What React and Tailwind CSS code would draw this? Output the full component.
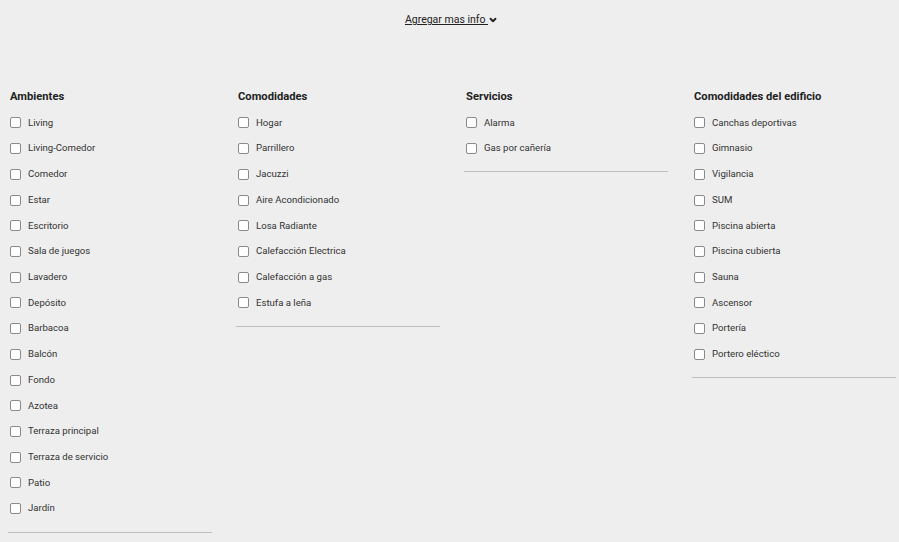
import { ChevronDown } from "lucide-react";

const columns = [
  {
    title: "Ambientes",
    items: [
      "Living",
      "Living-Comedor",
      "Comedor",
      "Estar",
      "Escritorio",
      "Sala de juegos",
      "Lavadero",
      "Depósito",
      "Barbacoa",
      "Balcón",
      "Fondo",
      "Azotea",
      "Terraza principal",
      "Terraza de servicio",
      "Patio",
      "Jardín",
    ],
  },
  {
    title: "Comodidades",
    items: [
      "Hogar",
      "Parrillero",
      "Jacuzzi",
      "Aire Acondicionado",
      "Losa Radiante",
      "Calefacción Electrica",
      "Calefacción a gas",
      "Estufa a leña",
    ],
  },
  {
    title: "Servicios",
    items: ["Alarma", "Gas por cañería"],
  },
  {
    title: "Comodidades del edificio",
    items: [
      "Canchas deportivas",
      "Gimnasio",
      "Vigilancia",
      "SUM",
      "Piscina abierta",
      "Piscina cubierta",
      "Sauna",
      "Ascensor",
      "Portería",
      "Portero eléctico",
    ],
  },
];

function Column({ title, items }) {
  return (
    <div>
      <h3 className="pl-[2px] text-[11.2px] font-bold leading-[14px] text-[#222]">
        {title}
      </h3>
      <ul className="mt-[6px]">
        {items.map((item) => (
          <li key={item} className="flex h-[25.73px] items-center pl-[2px]">
            <span className="h-[11px] w-[11px] shrink-0 rounded-[2px] border border-[#8a8a8a] bg-white" />
            <span className="ml-[7px] text-[9.6px] text-[#333]">{item}</span>
          </li>
        ))}
      </ul>
      <div className="mt-[10px] border-t border-[#bdbdbd]" />
    </div>
  );
}

export default function App() {
  return (
    <div
      className="min-h-[542px] bg-[#eeeeee]"
      style={{ fontFamily: "Roboto, 'Liberation Sans', sans-serif" }}
    >
      <div className="flex justify-center pt-[12px] pl-[4px]">
        <a className="flex items-center text-[10.5px] leading-[15px] text-[#222] underline">
          {"Agregar mas info\u00a0"}
          <ChevronDown size={10} strokeWidth={4.5} />
        </a>
      </div>
      <div className="mt-[63px] grid grid-cols-[repeat(4,204px)] gap-x-[24px] px-2 items-start">
        {columns.map((col) => (
          <Column key={col.title} {...col} />
        ))}
      </div>
    </div>
  );
}
